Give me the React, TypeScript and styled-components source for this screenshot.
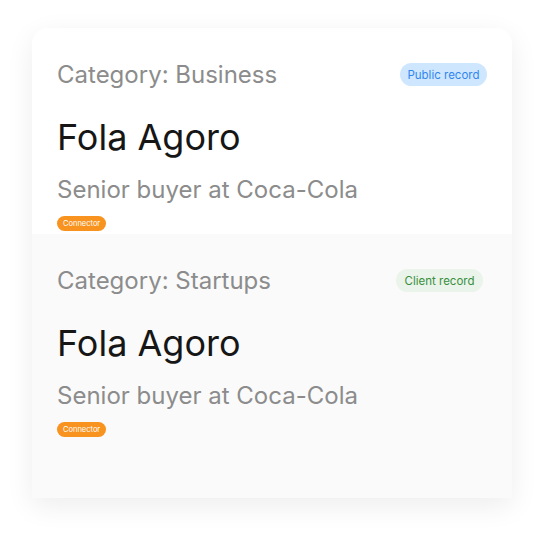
import React from "react";
import styled, { createGlobalStyle } from "styled-components";

const Global = createGlobalStyle`
  html, body { margin: 0; padding: 0; background: #ffffff; }
  body { font-family: Inter, "Noto Sans", sans-serif; }
`;

const Page = styled.div`
  width: 544px;
  height: 534px;
  padding: 28px 32px 0;
  box-sizing: border-box;
`;

const Card = styled.div`
  width: 480px;
  height: 470px;
  border-radius: 16px 16px 0 0;
  background: #ffffff;
  box-shadow: 0 8px 28px rgba(0, 0, 0, 0.075);
  display: flex;
  flex-direction: column;
  overflow: hidden;
`;

const Section = styled.section<{ $tint?: boolean; $grow?: boolean }>`
  background: ${(p) => (p.$tint ? "#fafafa" : "#ffffff")};
  padding: 32px 25px 3px 25px;
  flex: ${(p) => (p.$grow ? "1 1 auto" : "0 0 auto")};
  display: flex;
  flex-direction: column;
  align-items: flex-start;
`;

const HeaderRow = styled.div`
  width: 100%;
  display: flex;
  align-items: center;
  justify-content: space-between;
`;

const Category = styled.div`
  font-size: 24px;
  line-height: 29px;
  color: #8c8c8c;
`;

const Pill = styled.span<{ $bg: string; $fg: string; $mr: number; $pad: number }>`
  display: inline-flex;
  align-items: center;
  height: 23px;
  padding: 0 ${(p) => p.$pad}px;
  margin-right: ${(p) => p.$mr}px;
  border-radius: 12px;
  background: ${(p) => p.$bg};
  color: ${(p) => p.$fg};
  font-size: 11.5px;
`;

const Name = styled.h2`
  margin: 26px 0 0;
  font-size: 36px;
  line-height: 44px;
  font-weight: 400;
  color: #161616;
`;

const Role = styled.div`
  margin-top: 16px;
  font-size: 24px;
  line-height: 29px;
  color: #8c8c8c;
`;

const Tag = styled.span`
  margin-top: 12px;
  display: inline-flex;
  align-items: center;
  height: 15px;
  padding: 0 6px;
  border-radius: 8px;
  background: #f7931e;
  color: #ffffff;
  font-size: 7.5px;
`;

type Rec = {
  category: string;
  pill: string;
  bg: string;
  fg: string;
  mr: number;
  pad: number;
};

const records: Rec[] = [
  { category: "Business", pill: "Public record", bg: "#cfe6ff", fg: "#2f86ee", mr: 0, pad: 7.5 },
  { category: "Startups", pill: "Client record", bg: "#eaf4ea", fg: "#3a8f3e", mr: 4, pad: 8.5 },
];

export default function App() {
  return (
    <Page>
      <Global />
      <Card>
        {records.map((r, i) => (
          <Section key={r.category} $tint={i === 1} $grow={i === 1}>
            <HeaderRow>
              <Category>Category: {r.category}</Category>
              <Pill $bg={r.bg} $fg={r.fg} $mr={r.mr} $pad={r.pad}>
                {r.pill}
              </Pill>
            </HeaderRow>
            <Name>Fola Agoro</Name>
            <Role>Senior buyer at Coca-Cola</Role>
            <Tag>Connector</Tag>
          </Section>
        ))}
      </Card>
    </Page>
  );
}
